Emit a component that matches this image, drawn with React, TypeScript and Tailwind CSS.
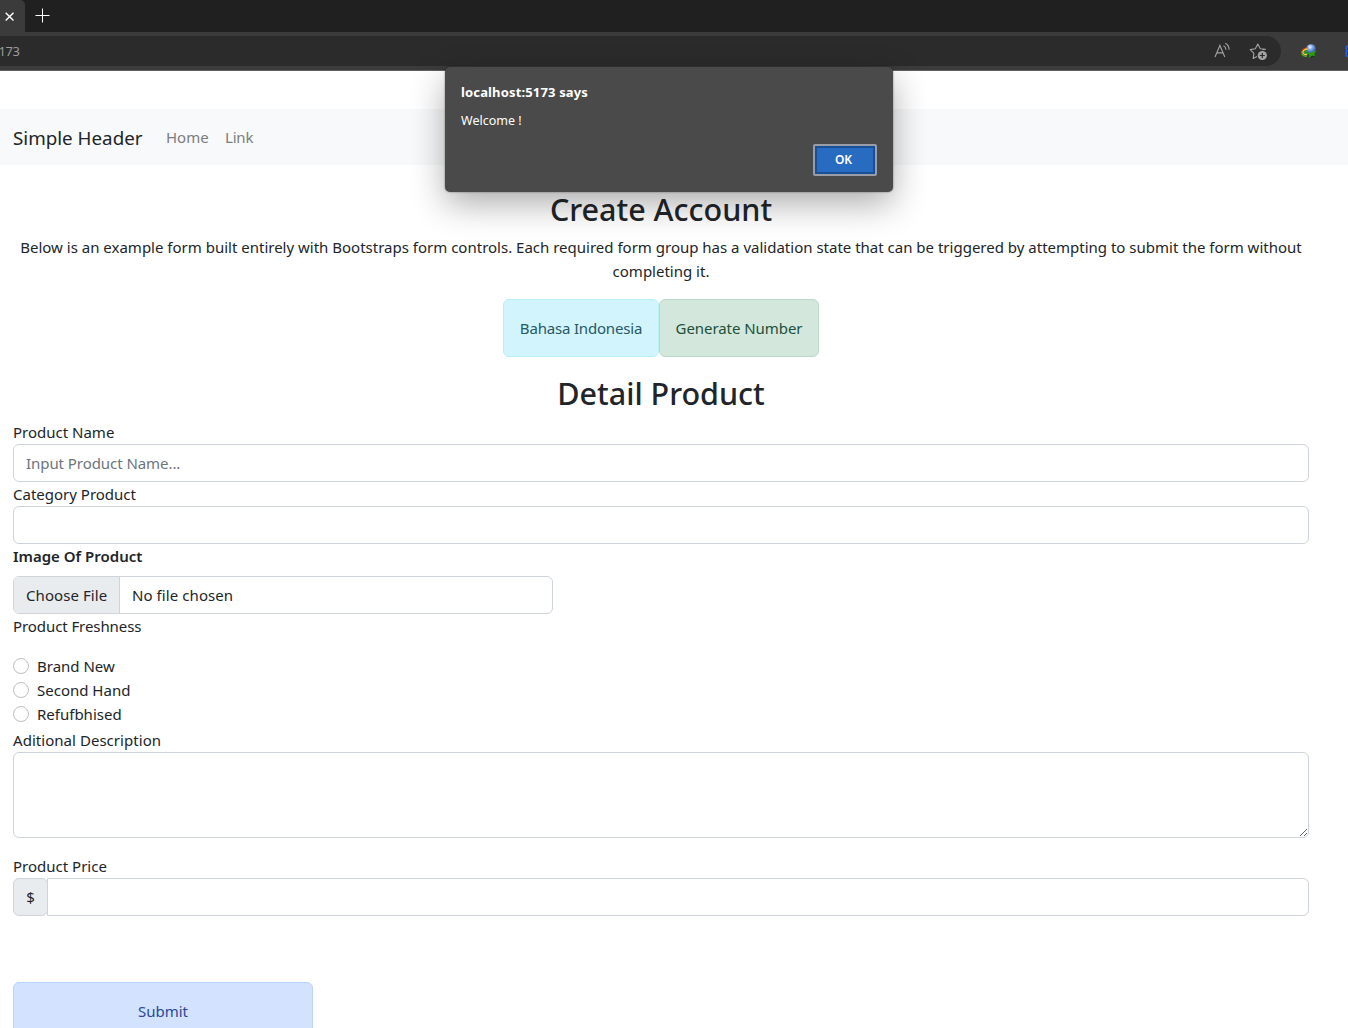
import React from "react";

function BrowserChrome() {
  return (
    <header className="h-[71px] shrink-0 border-b border-[#616161] bg-[#3b3b3b]">
      <div className="flex h-8 bg-[#202020]">
        <div className="flex w-[25px] items-center rounded-tr-[5px] bg-[#3b3b3b] pl-1">
          <svg className="size-[11px]" viewBox="0 0 11 11" fill="none" stroke="#fff" strokeWidth="1.4">
            <path d="M1.7 1.7l7.8 7.8M9.5 1.7L1.7 9.5" />
          </svg>
        </div>
        <svg className="mt-2 ml-[10px] size-[15px]" viewBox="0 0 15 15" fill="none" stroke="#fff" strokeWidth="1">
          <path d="M7.5 0.5v14M0.5 7.5h14" />
        </svg>
      </div>
      <div className="flex h-[38px] items-center">
        <div className="flex h-[30px] w-[1281px] shrink-0 items-center rounded-r-full bg-[#2b2b2b]">
          <span className="-ml-[1.5px] text-[13px] tracking-[-0.4px] text-[#9b9b9b]">173</span>
          <svg className="mr-[18px] mb-0.5 ml-auto h-4 w-[17px]" viewBox="0 0 17 16" fill="none" stroke="#a3a3a3" strokeWidth="1.1">
            <path d="M1 15L5.900 3.500L10.800 15M2.800 10.900h6.200" />
            <path d="M9.500 3.800c1.500.7 2.400 2 2.400 3.900M11.300 1.300c2.400 1.300 3.800 3.500 3.800 6.400" />
          </svg>
          <svg className="mt-0.5 mr-[13px] h-[18px] w-[19px]" viewBox="0 0 19 18" fill="none">
            <path
              d="M13.500 6.600L16.500 6.200L11.300 5.700L8.800 1.100L6.300 5.700L1.200 6.600L4.900 10.300L4.200 15.400L8 13.600"
              stroke="#a3a3a3"
              strokeWidth="1.100"
              strokeLinejoin="round"
            />
            <circle cx="13.300" cy="12.500" r="4.600" fill="#a3a3a3" />
            <path d="M13.300 10v5M10.800 12.500h5" stroke="#2b2b2b" strokeWidth="1.200" />
          </svg>
        </div>
        <svg className="ml-[19px] size-[17px] shrink-0" viewBox="0 0 17 17" fill="none">
          <defs>
            <radialGradient id="globe" cx="0.4" cy="0.3" r="0.7">
              <stop offset="0" stopColor="#eef5ff" />
              <stop offset="0.4" stopColor="#7fa5e4" />
              <stop offset="1" stopColor="#244f9f" />
            </radialGradient>
          </defs>
          <circle cx="11" cy="6" r="4.800" fill="url(#globe)" />
          <path d="M7.500 4.800C4 5 1.200 7.400 1.500 9.900c.3 2.200 2.700 3 5.500 2.900" stroke="#c3421d" strokeWidth="1.300" />
          <path d="M7.500 6C4.700 6.200 2.500 8 2.900 9.700c.4 1.500 2 2.100 4.300 2" stroke="#f4dc35" strokeWidth="1.300" />
          <path d="M1.800 11.200c1 1.600 3 2.200 5.200 2M7.500 7.800c-1.900.1-3.100.9-2.700 1.900.3.800 1.500 1 2.700 1" stroke="#3fae28" strokeWidth="1.300" />
          <path d="M5.500 9l4.700.8 6.400-2.200-2.200 3.100.8 2.300-3.100-.2-3 2.700.3-3.500z" fill="#2a9b12" />
          <path d="M9.100 15.500l3-2.700 3.100.2-2.600 1z" fill="#12380d" />
        </svg>
        <svg className="ml-[27px] h-4 w-1 shrink-0 overflow-hidden" viewBox="0 0 4 16" fill="none">
          <circle cx="5" cy="5.500" r="2.800" stroke="#2c5ed2" strokeWidth="1.600" />
          <circle cx="5" cy="10.700" r="3" stroke="#2c5ed2" strokeWidth="1.600" />
        </svg>
      </div>
    </header>
  );
}

function Alert() {
  return (
    <div
      role="alertdialog"
      className="absolute top-[67px] left-[445px] h-[125px] w-[448px] rounded-[5px] bg-[#4a4a4a] px-4 pt-4 text-[12.5px] leading-[18px] text-white shadow-[0_0_2px_rgba(0,0,0,0.5),0_12px_34px_rgba(0,0,0,0.32)]"
    >
      <p className="text-[13px] font-bold tracking-[0.15px]">localhost:5173 says</p>
      <p className="mt-[11px]">Welcome !</p>
      <button className="absolute right-4 bottom-4 h-8 w-16 rounded-[2px] border-2 border-[#999ea6] bg-[#286cc2] pr-[3px] text-xs leading-none font-semibold tracking-[-0.1px] shadow-[inset_0_0_0_2px_#184f96]">
        OK
      </button>
    </div>
  );
}

const control = "block w-full rounded-md border border-[#ced4da] bg-white px-3 outline-none";

function Radio({ label }: { label: string }) {
  return (
    <label className="flex h-6 items-center gap-2">
      <input type="radio" name="freshness" className="size-4 appearance-none rounded-full border border-[#bfbfbf] bg-white" />
      {label}
    </label>
  );
}

export default function App() {
  return (
    <div className="relative flex h-[1028px] w-[1348px] flex-col overflow-hidden bg-white font-['Noto_Sans','Open_Sans',sans-serif] text-[15px] leading-6 text-[#212529]">
      <BrowserChrome />
      <nav className="mt-[38px] flex h-14 shrink-0 items-center bg-[#f8f9fa] pl-[13px]">
        <span className="w-[153px] pt-px text-[18.8px]">Simple Header</span>
        <span className="w-[59px] text-[#7c7d7d]">Home</span>
        <span className="tracking-[-0.2px] text-[#7c7d7d]">Link</span>
      </nav>

      <main className="ml-[13px] w-[1296px] shrink-0 pt-[26px]">
        <h2 className="h-[36px] text-center text-[30.5px] leading-[37px] font-medium">Create Account</h2>
        <p className="mt-2 text-center">
          Below is an example form built entirely with Bootstraps form controls. Each required form group has a validation
          state that can be triggered by attempting to submit the form without
          <br />
          completing it.
        </p>
        <div className="mt-4 flex justify-center">
          <button className="h-[58px] w-[156px] rounded-md border border-[#b9effb] bg-[#d2f4fc] tracking-[-0.18px] text-[#265867]">
            Bahasa Indonesia
          </button>
          <button className="h-[58px] w-[160px] rounded-md border border-[#badbcc] bg-[#d3e7dd] tracking-[-0.06px] text-[#21503a]">
            Generate Number
          </button>
        </div>
        <h2 className="mt-[17px] mb-2 h-[38px] text-center text-[30.5px] leading-[39px] font-medium">Detail Product</h2>

        <label className="block">Product Name</label>
        <input className={`${control} h-[38px] tracking-[-0.06px] placeholder:text-[#6c757d]`} placeholder="Input Product Name..." />
        <label className="block">Category Product</label>
        <input className={`${control} h-[38px]`} />
        <label className="mb-2 block font-semibold">Image Of Product</label>
        <div className="flex h-[38px] w-[540px] items-center overflow-hidden rounded-md border border-[#ced4da]">
          <span className="flex h-full w-[106px] items-center border-r border-[#ced4da] bg-[#e9ecef] pl-3 tracking-[0.08px]">Choose File</span>
          <span className="pl-3 tracking-[0.08px]">No file chosen</span>
        </div>
        <p className="mb-4 tracking-[-0.08px]">Product Freshness</p>
        <Radio label="Brand New" />
        <Radio label="Second Hand" />
        <Radio label="Refufbhised" />
        <label className="mt-0.5 block tracking-[0.04px]">Aditional Description</label>
        <textarea className={`${control} h-[86px] resize-y`} />
        <label className="mt-4 block">Product Price</label>
        <div className="flex h-[38px]">
          <span className="flex w-[35px] items-center justify-center rounded-md border border-[#ced4da] bg-[#e9ecef]">$</span>
          <input className="-ml-px min-w-0 flex-1 rounded-r-md border border-[#ced4da] bg-white outline-none" />
        </div>
        <button className="mt-[66px] block h-[58px] w-[300px] rounded-md border border-[#b6d4fe] bg-[#d2e2ff] text-[#284a98]">
          Submit
        </button>
      </main>
      <Alert />
    </div>
  );
}
